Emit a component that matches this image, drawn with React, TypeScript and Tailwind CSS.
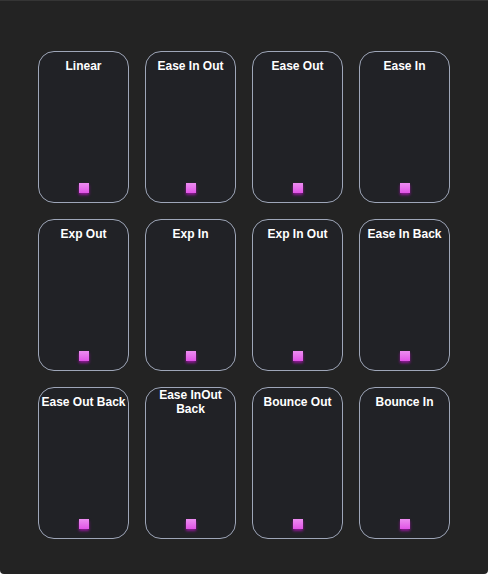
import React from "react";

const names = [
  "Linear",
  "Ease In Out",
  "Ease Out",
  "Ease In",
  "Exp Out",
  "Exp In",
  "Exp In Out",
  "Ease In Back",
  "Ease Out Back",
  "Ease InOut Back",
  "Bounce Out",
  "Bounce In",
];

function Card({ name }: { name: string }) {
  return (
    <div className="flex h-[152px] w-[91px] flex-col items-center rounded-[16px] border-[1.5px] border-[#9ea6b8] bg-[#212226]">
      <div className="flex h-[28px] w-full items-center justify-center px-[1px] text-center text-[12px] font-bold leading-[14px] text-white">
        {name}
      </div>
      <div className="flex-1" />
      <div className="mb-[9px] h-[10px] w-[10px] bg-gradient-to-b from-[#ec8cf0] to-[#e052e6] shadow-[0_2px_3px_rgba(190,20,200,0.7)]" />
    </div>
  );
}

export default function App() {
  return (
    <div
      className="h-[574px] w-[488px] overflow-hidden rounded-b-[4px] border-t border-[#353535] bg-[#232323] pl-[38px] pt-[50px]"
      style={{ fontFamily: '"Liberation Sans", Arial, sans-serif' }}
    >
      <div className="grid grid-cols-[repeat(4,91px)] gap-x-[16px] gap-y-[16px]">
        {names.map((n) => (
          <Card key={n} name={n} />
        ))}
      </div>
    </div>
  );
}
